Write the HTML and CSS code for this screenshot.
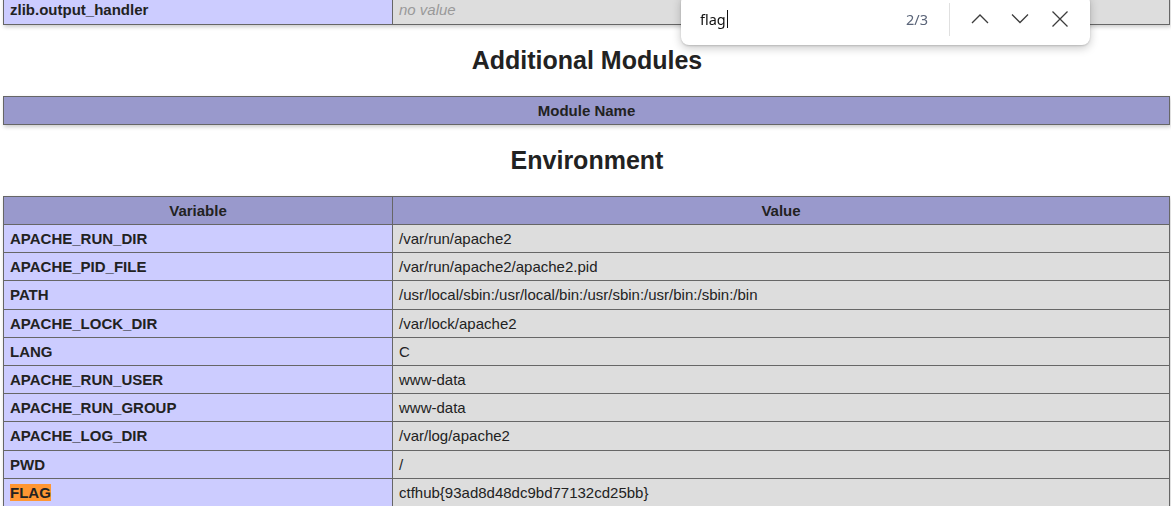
FILE: index.html
```html
<!DOCTYPE html>
<html>
<head>
<meta charset="utf-8">
<title>phpinfo()</title>
<link rel="stylesheet" href="styles.css">
</head>
<body>
<div class="center">
  <table class="cut">
    <tr><td class="e">zlib.output_handler</td><td class="v"><i>no value</i></td></tr>
  </table>
  <h2>Additional Modules</h2>
  <table>
    <tr class="h"><th>Module Name</th></tr>
  </table>
  <h2>Environment</h2>
  <table>
    <tr class="h"><th class="hv">Variable</th><th>Value</th></tr>
    <tr><td class="e">APACHE_RUN_DIR </td><td class="v">/var/run/apache2 </td></tr>
    <tr><td class="e">APACHE_PID_FILE </td><td class="v">/var/run/apache2/apache2.pid </td></tr>
    <tr><td class="e">PATH </td><td class="v">/usr/local/sbin:/usr/local/bin:/usr/sbin:/usr/bin:/sbin:/bin </td></tr>
    <tr><td class="e">APACHE_LOCK_DIR </td><td class="v">/var/lock/apache2 </td></tr>
    <tr><td class="e">LANG </td><td class="v">C </td></tr>
    <tr><td class="e">APACHE_RUN_USER </td><td class="v">www-data </td></tr>
    <tr><td class="e">APACHE_RUN_GROUP </td><td class="v">www-data </td></tr>
    <tr><td class="e">APACHE_LOG_DIR </td><td class="v">/var/log/apache2 </td></tr>
    <tr><td class="e">PWD </td><td class="v">/ </td></tr>
    <tr><td class="e"><span class="match">FLAG</span> </td><td class="v">ctfhub{93ad8d48dc9bd77132cd25bb} </td></tr>
  </table>
</div>

<div class="findbar">
  <div class="query">flag<span class="caret"></span></div>
  <div class="count">2/3</div>
  <div class="sep"></div>
  <button class="fbtn" aria-label="Previous">
    <svg width="18" height="11" viewBox="0 0 18 11"><polyline points="1,10 9,2 17,10" fill="none" stroke="#3c3c3c" stroke-width="1.3"/></svg>
  </button>
  <button class="fbtn" aria-label="Next">
    <svg width="18" height="11" viewBox="0 0 18 11"><polyline points="1,1.5 9,9.5 17,1.5" fill="none" stroke="#3c3c3c" stroke-width="1.3"/></svg>
  </button>
  <button class="fbtn" aria-label="Close">
    <svg width="18" height="18" viewBox="0 0 18 18"><path d="M1.5 1.5 L16.5 16.5 M16.5 1.5 L1.5 16.5" fill="none" stroke="#3c3c3c" stroke-width="1.3"/></svg>
  </button>
</div>
</body>
</html>
```
FILE: styles.css
```css
html, body {
  margin: 0;
  background: #fff;
  color: #222;
  font-family: "Liberation Sans", Arial, sans-serif;
  overflow: hidden;
}

.center {
  padding-left: 3px;
}

table {
  border-collapse: collapse;
  border: 0;
  width: 1167px;
  margin: 0;
  box-shadow: 1px 2px 4px #ccc;
  text-align: left;
}

table.cut {
  margin-top: -4.7px;
}

td, th {
  border: 1px solid #666;
  font-size: 15px;
  line-height: 17.2px;
  vertical-align: baseline;
  padding: 5px 6px;
}

th {
  text-align: center;
}

h2 {
  font-size: 25px;
  line-height: 29px;
  margin: 21px 0;
  text-align: center;
  font-weight: bold;
}

.e {
  background-color: #ccf;
  width: 376px;
  font-weight: bold;
}

.h {
  background-color: #99c;
  font-weight: bold;
}

.v {
  background-color: #ddd;
}

.v i {
  color: #999;
}

.match {
  background: #ff9632;
}

/* find bar */
.findbar {
  position: fixed;
  top: -6px;
  left: 681px;
  width: 409px;
  height: 51px;
  padding-top: 6px;
  box-sizing: border-box;
  background: #fff;
  border-radius: 8px;
  box-shadow: 0 3px 10px rgba(0, 0, 0, 0.22), 0 1px 2px rgba(0, 0, 0, 0.15);
  display: flex;
  align-items: center;
  font-family: "Noto Sans", "Open Sans", sans-serif;
  padding-left: 19px;
  padding-right: 10px;
}

.query {
  flex: 1;
  font-size: 14.5px;
  color: #111;
  display: flex;
  align-items: center;
  margin-top: -8px;
}

.caret {
  display: inline-block;
  width: 1px;
  height: 18px;
  background: #111;
  margin-left: 1px;
}

.count {
  font-size: 14.5px;
  color: #5a6478;
  margin-top: -8px;
  margin-right: 21px;
}

.sep {
  width: 1px;
  height: 33px;
  background: #e0e0e0;
  margin-top: -7px;
  margin-right: 10px;
}

.fbtn {
  width: 40px;
  height: 36px;
  border: 0;
  background: none;
  padding: 0;
  display: flex;
  align-items: center;
  justify-content: center;
  margin-top: -8px;
}
```
